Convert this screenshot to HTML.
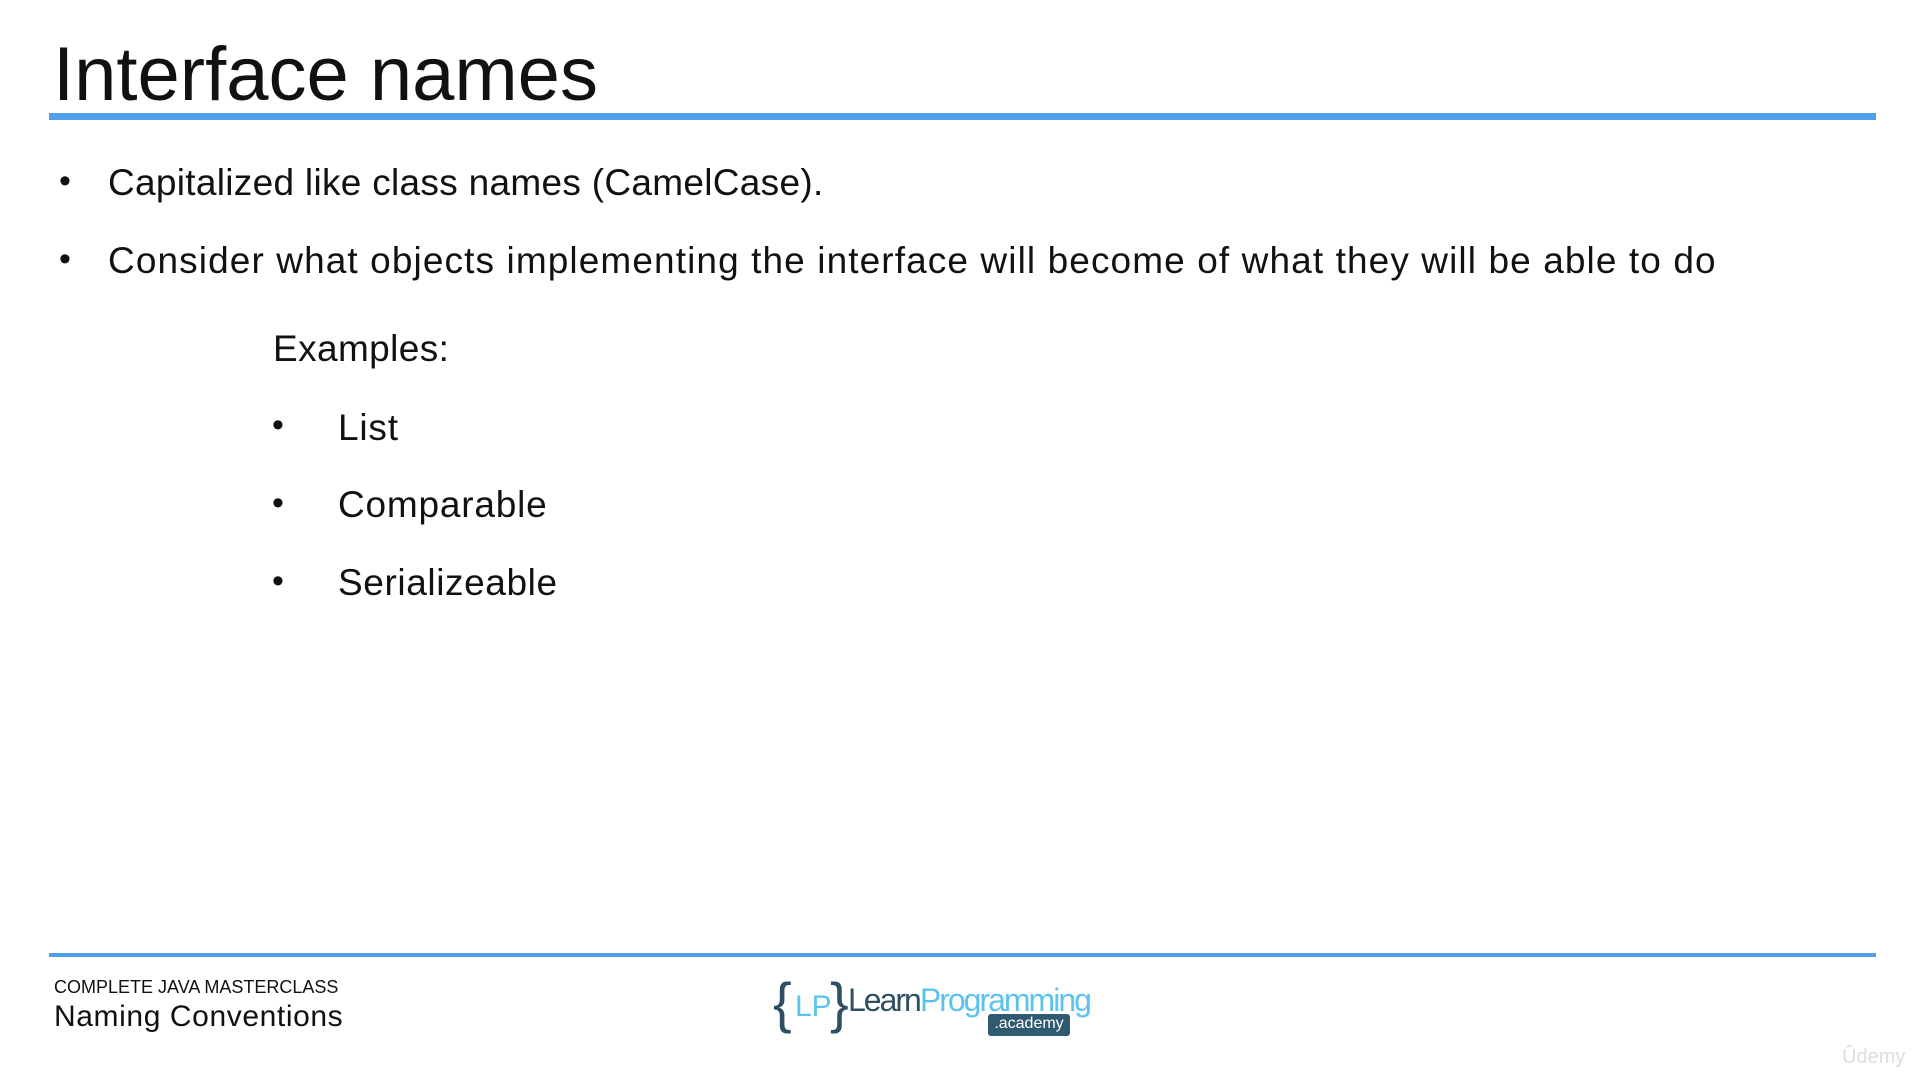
<!DOCTYPE html>
<html><head><meta charset="utf-8"><style>
body{margin:0;width:1920px;height:1080px;background:#fff;font-family:"Liberation Sans",sans-serif;color:#111;position:relative;overflow:hidden}
.a{position:absolute;white-space:nowrap}
.t{left:53px;top:30px;font-size:76px;line-height:90px}
.hl{position:absolute;left:49px;width:1827px;top:113px;height:7px;background:#4f9fea}
.bl{position:absolute;left:49px;width:1827px;top:953px;height:4px;background:#4f9fea}
.b{font-size:37px;line-height:44px}
.dot{font-size:34px}
</style></head><body>
<div class="a t">Interface names</div>
<div class="hl"></div>
<div class="a dot" style="left:59px;top:162px">•</div>
<div class="a b" style="left:108px;top:161px;letter-spacing:0.3px">Capitalized like class names (CamelCase).</div>
<div class="a dot" style="left:59px;top:240px">•</div>
<div class="a b" style="left:108px;top:239px;letter-spacing:1.1px">Consider what objects implementing the interface will become of what they will be able to do</div>
<div class="a b" style="left:273px;top:327px;letter-spacing:0.4px">Examples:</div>
<div class="a dot" style="left:272px;top:406px">•</div>
<div class="a b" style="left:338px;top:406px;letter-spacing:0.8px">List</div>
<div class="a dot" style="left:272px;top:484px">•</div>
<div class="a b" style="left:338px;top:483px;letter-spacing:0.8px">Comparable</div>
<div class="a dot" style="left:272px;top:562px">•</div>
<div class="a b" style="left:338px;top:561px;letter-spacing:0.6px">Serializeable</div>
<div class="bl"></div>
<div class="a" style="left:54px;top:977px;font-size:18px">COMPLETE JAVA MASTERCLASS</div>
<div class="a" style="left:54px;top:1000px;font-size:30px;letter-spacing:0.6px">Naming Conventions</div>
<div class="a" style="left:773px;top:970px;font-size:56px;color:#2f4f63;line-height:66px">{</div>
<div class="a" style="left:795px;top:990px;font-size:30px;color:#5bc3ee">LP</div>
<div class="a" style="left:830px;top:970px;font-size:56px;color:#2f4f63;line-height:66px">}</div>
<div class="a" style="left:848px;top:982px;font-size:32px;letter-spacing:-2px"><span style="color:#2f4f63">Learn</span><span style="color:#5bc3ee">Programming</span></div>
<div class="a" style="left:988px;top:1014px;width:82px;height:22px;background:#2f5a70;border-radius:3px;color:#fff;font-size:16px;text-align:center;line-height:20px">.academy</div>
<div class="a" style="left:1842px;top:1046px;font-size:20px;color:#ddd">Ûdemy</div>
</body></html>
